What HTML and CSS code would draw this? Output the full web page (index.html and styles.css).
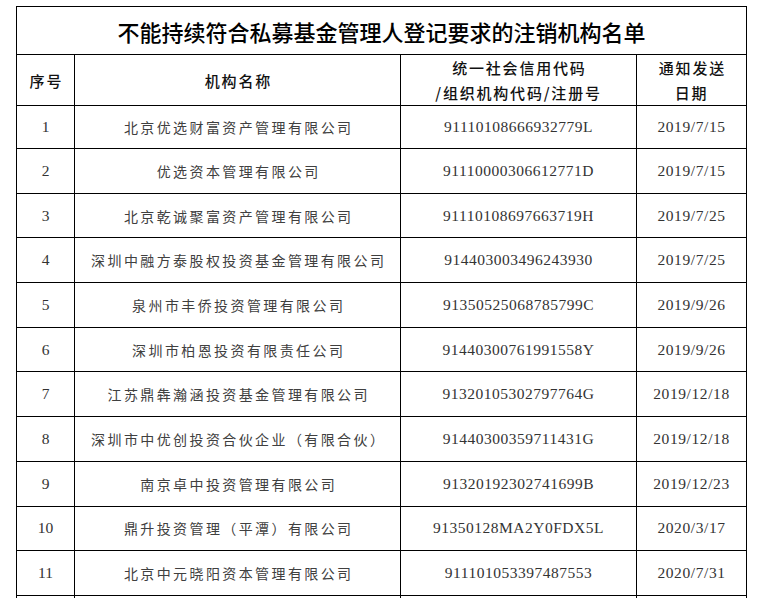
FILE: index.html
```html
<!DOCTYPE html>
<html lang="zh-CN">
<head>
<meta charset="utf-8">
<title>不能持续符合私募基金管理人登记要求的注销机构名单</title>
<link rel="stylesheet" href="styles.css">
</head>
<body>
<div class="sheet">
<table class="list">
  <colgroup>
    <col class="c-idx"><col class="c-name"><col class="c-code"><col class="c-date">
  </colgroup>
  <tr class="r-title"><td colspan="4" class="title">不能持续符合私募基金管理人登记要求的注销机构名单</td></tr>
  <tr class="r-head">
    <td class="head">序号</td>
    <td class="head">机构名称</td>
    <td class="head">统一社会信用代码<br>/组织机构代码/注册号</td>
    <td class="head">通知发送<br>日期</td>
  </tr>
  <tr class="r-data r-first"><td class="idx">1</td><td class="name">北京优选财富资产管理有限公司</td><td class="code">91110108666932779L</td><td class="date">2019/7/15</td></tr>
  <tr class="r-data"><td class="idx">2</td><td class="name">优选资本管理有限公司</td><td class="code">91110000306612771D</td><td class="date">2019/7/15</td></tr>
  <tr class="r-data"><td class="idx">3</td><td class="name">北京乾诚聚富资产管理有限公司</td><td class="code">91110108697663719H</td><td class="date">2019/7/25</td></tr>
  <tr class="r-data"><td class="idx">4</td><td class="name">深圳中融方泰股权投资基金管理有限公司</td><td class="code">914403003496243930</td><td class="date">2019/7/25</td></tr>
  <tr class="r-data"><td class="idx">5</td><td class="name">泉州市丰侨投资管理有限公司</td><td class="code">91350525068785799C</td><td class="date">2019/9/26</td></tr>
  <tr class="r-data"><td class="idx">6</td><td class="name">深圳市柏恩投资有限责任公司</td><td class="code">91440300761991558Y</td><td class="date">2019/9/26</td></tr>
  <tr class="r-data"><td class="idx">7</td><td class="name">江苏鼎犇瀚涵投资基金管理有限公司</td><td class="code">91320105302797764G</td><td class="date">2019/12/18</td></tr>
  <tr class="r-data"><td class="idx">8</td><td class="name">深圳市中优创投资合伙企业（有限合伙）</td><td class="code">91440300359711431G</td><td class="date">2019/12/18</td></tr>
  <tr class="r-data"><td class="idx">9</td><td class="name">南京卓中投资管理有限公司</td><td class="code">91320192302741699B</td><td class="date">2019/12/23</td></tr>
  <tr class="r-data"><td class="idx">10</td><td class="name">鼎升投资管理（平潭）有限公司</td><td class="code">91350128MA2Y0FDX5L</td><td class="date">2020/3/17</td></tr>
  <tr class="r-data"><td class="idx">11</td><td class="name">北京中元晓阳资本管理有限公司</td><td class="code">911101053397487553</td><td class="date">2020/7/31</td></tr>
  <tr class="r-data"><td class="idx"></td><td class="name"></td><td class="code"></td><td class="date"></td></tr>
</table>
</div>
</body>
</html>
```
FILE: styles.css
```css
html, body {
  margin: 0;
  padding: 0;
  background: #fff;
}
body {
  padding: 6px 0 0 16px;
}
.sheet {
  width: 740px;
  height: 592px;
  overflow: hidden;
}
.list {
  border-collapse: collapse;
  table-layout: fixed;
  width: 730px;
}
.c-idx { width: 58px; }
.c-name { width: 326px; }
.c-code { width: 236px; }
.c-date { width: 110px; }
.list td {
  border: 1px solid #000;
  padding: 0;
  text-align: center;
  vertical-align: middle;
}
.r-title { height: 48px; }
.r-head { height: 50px; }
.r-data { height: 44.7px; }
.r-first { height: 43px; }
.title {
  font-family: "Noto Sans CJK SC", sans-serif;
  font-size: 22px;
  font-weight: 500;
  color: #000;
  line-height: 26px;
  padding-top: 1px;
}
.head {
  font-family: "Noto Sans CJK SC", sans-serif;
  font-size: 15px;
  font-weight: 500;
  color: #111;
  line-height: 25px;
  letter-spacing: 1.8px;
  text-indent: 1.8px;
}
.name {
  font-family: "Noto Sans CJK SC", sans-serif;
  font-size: 14px;
  font-weight: 400;
  color: #404040;
  letter-spacing: 2.4px;
  text-indent: 2.4px;
  line-height: 20px;
}
.idx, .code, .date {
  font-family: "Liberation Serif", "Times New Roman", serif;
  font-size: 15.5px;
  color: #333;
  line-height: 20px;
}
.code { letter-spacing: 0.5px; }
.date { letter-spacing: 0.6px; }
```
